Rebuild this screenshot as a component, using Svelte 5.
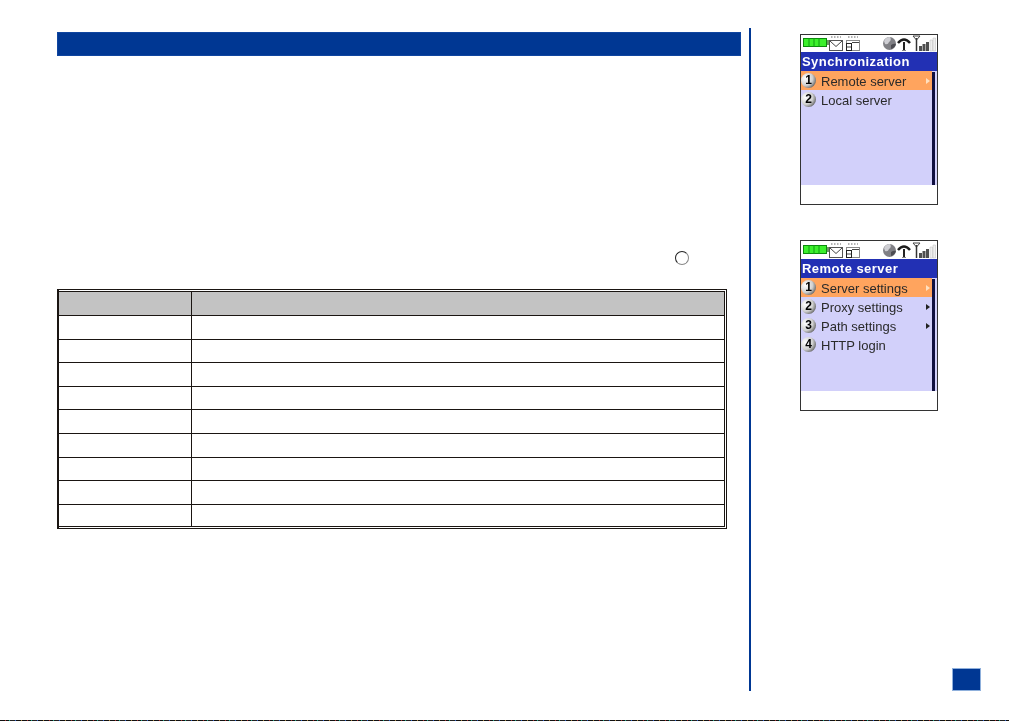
<script lang="ts">
  const rows = Array.from({ length: 9 });

  const phones = [
    {
      title: 'Synchronization',
      items: [
        { label: 'Remote server', arrow: true },
        { label: 'Local server', arrow: false }
      ]
    },
    {
      title: 'Remote server',
      items: [
        { label: 'Server settings', arrow: true },
        { label: 'Proxy settings', arrow: true },
        { label: 'Path settings', arrow: true },
        { label: 'HTTP login', arrow: false }
      ]
    }
  ];
</script>

<div class="page">
  <div class="main">
    <section class="content">
      <div class="heading"></div>
      <div class="circle-line"><span class="circle"></span></div>
      <div class="table">
        <div class="row head">
          <div class="c1"></div>
          <div class="c2"></div>
        </div>
        {#each rows as _}
          <div class="row">
            <div class="c1"></div>
            <div class="c2"></div>
          </div>
        {/each}
      </div>
    </section>

    <aside class="side">
      <div class="phones">
        {#each phones as phone}
          <div class="phone">
            <div class="status">
              <svg width="134" height="18" viewBox="0 0 134 18">
                <!-- battery -->
                <rect x="1" y="4" width="24" height="9" fill="#0c8a0c" />
                <rect x="2" y="5" width="22" height="7" fill="#3cf02c" />
                <path d="M7 4v9M12 4v9M17 4v9" stroke="#0f9a10" stroke-width="1" />
                <rect x="25" y="6" width="2" height="5" fill="#6a9a60" />
                <!-- mail -->
                <path d="M29 3h1.500M32 3h1.500M35 3h1.500M38 3h1" stroke="#666" />
                <rect x="27.500" y="6.500" width="13" height="10" fill="#fff" stroke="#555" />
                <path d="M28 7l6 5.500 6-5.500" fill="none" stroke="#444" />
                <!-- calendar -->
                <path d="M46 3h1.500M49 3h1.500M52 3h1.500M55 3h1" stroke="#666" />
                <rect x="44.500" y="6.500" width="13" height="10" fill="#fff" stroke="#888" />
                <rect x="44.500" y="9.500" width="5" height="7" fill="#fff" stroke="#222" />
                <path d="M45 13h4M50 8.500h7" stroke="#444" />
                <!-- globe -->
                <circle cx="87.500" cy="9.500" r="6.500" fill="#808085" />
                <path d="M82 7q2-4 6-4q2 3-1 5q-1 3-4 2z" fill="#cfcfd4" />
                <path d="M89 11q3-2 5-1q-1 4-5 5z" fill="#4c4c52" />
                <!-- handset -->
                <path d="M96 9q6-7 12 0" fill="none" stroke="#1c1c1c" stroke-width="2.500" />
                <path d="M102 8v8" stroke="#222" stroke-width="2" />
                <path d="M100 16.500h4" stroke="#888" />
                <!-- signal -->
                <path d="M111 2h7l-3.500 4z" fill="none" stroke="#444" />
                <path d="M114.500 4v13" stroke="#333" stroke-width="1.500" />
                <path d="M117 17v-5h3v5zM120.500 17v-7h3v7zM124 17v-9h3v9z" fill="#4f4f4f" />
                <path d="M128 17v-11h2.500v11zM131 17v-13h2.500v13z" fill="#eee" stroke="#bdbdbd" stroke-width="0.500" />
              </svg>
            </div>
            <div class="title">{phone.title}</div>
            <div class="body">
              <ul class="menu">
                {#each phone.items as item, i}
                  <li class:active={i === 0}>
                    <span class="num">{i + 1}</span>
                    <span class="label">{item.label}</span>
                    {#if item.arrow}<span class="arrow"></span>{/if}
                  </li>
                {/each}
              </ul>
              <div class="scroll"></div>
            </div>
            <div class="softkeys"></div>
          </div>
        {/each}
      </div>
      <div class="badge"></div>
    </aside>
  </div>
  <div class="strip"></div>
</div>

<style>
  :global(body) {
    margin: 0;
    background: #fff;
  }
  .page {
    width: 1009px;
    height: 721px;
    display: flex;
    flex-direction: column;
    overflow: hidden;
    font-family: 'Liberation Sans', Arial, sans-serif;
  }
  .main {
    flex: 1;
    display: flex;
    padding: 28px 0 29px 57px;
  }
  .content {
    width: 684px;
    padding-top: 4px;
    margin-right: 8px;
  }
  .heading {
    height: 24px;
    background: #003793;
    box-sizing: border-box;
    border: 1px solid #0f45a0;
  }
  .circle-line {
    display: flex;
    justify-content: flex-end;
    padding: 195px 52px 24px 0;
  }
  .circle {
    width: 14px;
    height: 14px;
    box-sizing: border-box;
    border: 1px solid #222;
    border-right-color: #888;
    border-bottom-color: #888;
    border-radius: 50%;
  }
  .table {
    width: 670px;
    box-sizing: border-box;
    border: 1px solid #1a1512;
    border-left-width: 2px;
    padding: 1px 1px 1px 0;
  }
  .row {
    display: flex;
    height: 23.6px;
    box-sizing: border-box;
    border-bottom: 1px solid #1a1512;
  }
  .row:last-child {
    height: 22.6px;
  }
  .row.head {
    height: 25px;
    border-top: 1px solid #1a1512;
    background: #c3c3c3;
  }
  .c1 {
    width: 132px;
    flex: none;
    border-right: 1px solid #1a1512;
  }
  .c2 {
    flex: 1;
    border-right: 1px solid #1a1512;
  }
  .side {
    flex: 1;
    display: flex;
    flex-direction: column;
    border-left: 2px solid #003793;
  }
  .phones {
    display: flex;
    flex-direction: column;
    gap: 35px;
    padding: 6px 0 0 49px;
  }
  .phone {
    width: 138px;
    height: 171px;
    box-sizing: border-box;
    border: 1px solid #333;
    background: #fff;
    display: flex;
    flex-direction: column;
    filter: blur(0.45px);
  }
  .status {
    height: 17px;
    flex: none;
    overflow: hidden;
  }
  .status svg {
    display: block;
    margin: -1px 0 0 1px;
  }
  .phone + .phone .status {
    height: 18px;
  }
  .phone + .phone .status svg {
    margin-top: 0;
  }
  .phone + .phone .body {
    height: 113px;
  }
  .title {
    height: 19px;
    flex: none;
    background: #2230b4;
    color: #fff;
    font-size: 13px;
    font-weight: bold;
    letter-spacing: 0.45px;
    line-height: 19px;
    padding-left: 1px;
  }
  .body {
    height: 114px;
    flex: none;
    background: #d2d0fa;
    display: flex;
    position: relative;
  }
  .menu {
    list-style: none;
    margin: 0;
    padding: 0;
    flex: 1;
  }
  .menu li {
    height: 19px;
    display: flex;
    align-items: center;
    color: #2a2a2a;
    font-size: 13px;
    position: relative;
  }
  .menu li.active {
    background: #ffa45e;
  }
  .label {
    position: relative;
    top: 1px;
  }
  .num {
    width: 15px;
    height: 15px;
    margin: 0 5px 0 0;
    border-radius: 50%;
    background: radial-gradient(circle at 30% 35%, #fff, #d0d0d0 50%, #333 92%);
    color: #000;
    font-size: 12px;
    font-weight: bold;
    line-height: 15px;
    text-align: center;
    flex: none;
  }
  .arrow {
    position: absolute;
    right: 2px;
    top: 6.500px;
    border-left: 4px solid #222;
    border-top: 3px solid transparent;
    border-bottom: 3px solid transparent;
  }
  .active .arrow {
    border-left-color: #ffe0c0;
  }
  .scroll {
    width: 3px;
    margin: 1px 2px 0 0;
    background: #101040;
    flex: none;
  }
  .softkeys {
    flex: 1;
    background: #fff;
  }
  .badge {
    width: 29px;
    height: 23px;
    margin: auto 28px 0 auto;
    box-sizing: border-box;
    background: #003793;
    border: 1px solid #8fb0dc;
  }
  .strip {
    height: 1px;
    flex: none;
    background: repeating-linear-gradient(90deg, #111 0 5px, #a33 5px 6px, #111 6px 9px, #2a8 9px 10px, #222 10px 15px, #36c 15px 16px, #111 16px 21px, #a84 21px 22px);
  }
</style>
